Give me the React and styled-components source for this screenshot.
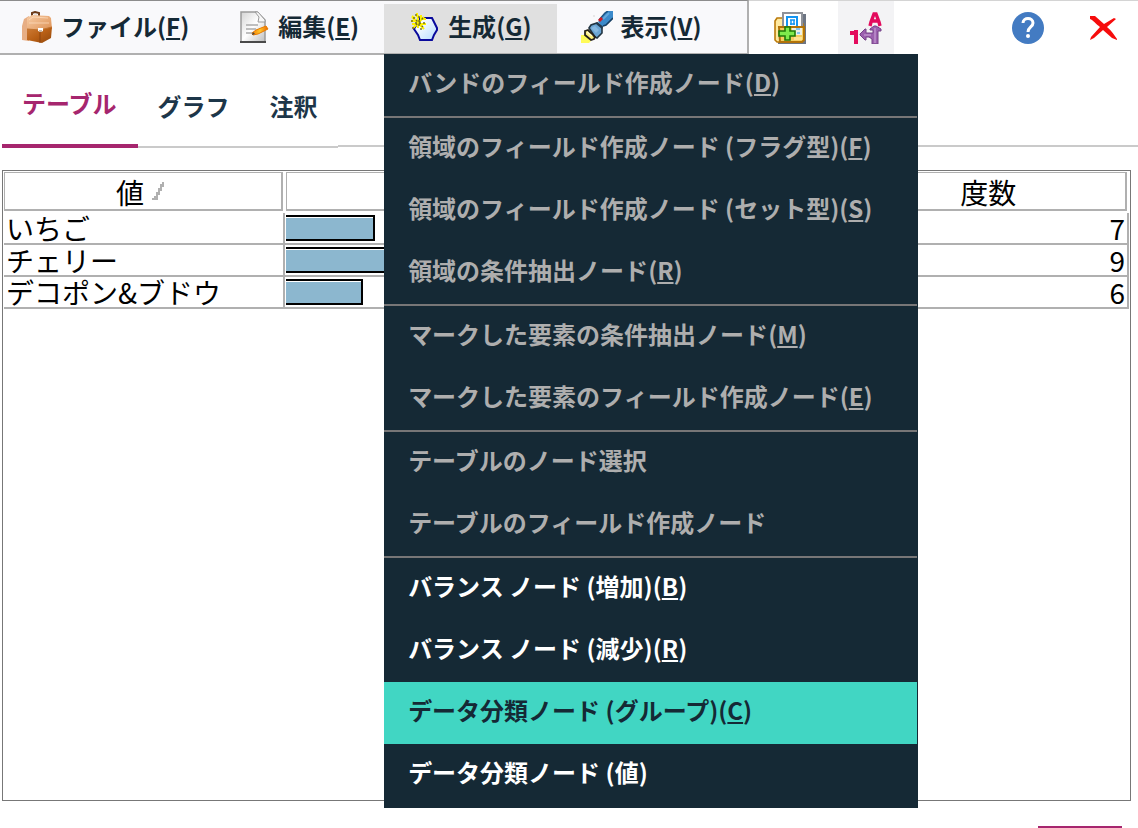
import React from 'react';
import styled, { createGlobalStyle } from 'styled-components';

const GlobalStyle = createGlobalStyle`
  * {
    box-sizing: border-box;
  }

  body {
    margin: 0;
    background: #fff;
    overflow: hidden;
  }

  body, button, table {
    font-family: "Noto Sans CJK JP", "Noto Sans", sans-serif;
  }
`;

const Window = styled.div`
  display: flex;
  flex-direction: column;
  height: 100vh;
`;

const TopBar = styled.header`
  display: flex;
  justify-content: space-between;
  flex: none;
  height: 55px;
  border-top: 1px solid #d4d4d4;
`;

const MenuBar = styled.nav`
  display: flex;
  margin-top: -1px;
  padding: 3px 20px 0 0;
  background: #f9f9fb;
  border-top: 1px solid #8c8c8c;
  border-right: 2px solid #b0b0b0;
  border-bottom: 2px solid #b0b0b0;
`;

const MenuItem = styled.div`
  position: relative;
`;

const MenuButton = styled.button`
  display: flex;
  align-items: center;
  gap: 8px;
  height: 100%;
  padding: 0 25px 4px ${(p) => (p.$first ? '21px' : '24px')};
  border: none;
  background: ${(p) => (p.$open ? '#e0e0e0' : 'transparent')};
  color: #152935;
  font-size: 24px;
  font-weight: 700;
  line-height: 36px;
  white-space: nowrap;
`;

const MenuText = styled.span`
  padding-bottom: 2px;
`;

const Mnemonic = styled.span`
  text-decoration: underline;
  text-decoration-thickness: 2px;
  text-underline-offset: 2px;
  text-decoration-skip-ink: none;
`;

const Icon = styled.svg`
  display: block;
  flex: none;
  width: 32px;
  height: 32px;
`;

const Dropdown = styled.div`
  position: absolute;
  top: calc(100% + 1px);
  left: 0;
  z-index: 10;
  min-width: 534px;
  padding: 0 1px 2px 0;
  background: #152935;
`;

const DropdownGroup = styled.div`
  & + & {
    border-top: 2px solid #777677;
  }
`;

const DropdownItem = styled.button`
  display: block;
  width: 100%;
  height: 62px;
  padding: 0 24px 7px;
  border: none;
  background: ${(p) => (p.$active ? '#41d6c3' : 'transparent')};
  color: ${(p) => (p.$active ? '#152935' : '#fff')};
  font-size: 24px;
  font-weight: 700;
  line-height: 36px;
  text-align: left;
  white-space: nowrap;

  &:disabled {
    color: #aeaeae;
  }
`;

const Tools = styled.div`
  display: flex;
  flex: 1;
  gap: 20px;
  padding: 0 6px 0 13px;
`;

const ToolButton = styled.button`
  display: flex;
  align-items: center;
  justify-content: center;
  width: 56px;
  padding: 0;
  border: none;
  background: ${(p) => (p.$pressed ? '#f3f3f5' : 'transparent')};
  margin-left: ${(p) => (p.$push ? 'auto' : '0')};
`;

const Tabs = styled.div`
  display: flex;
  flex: none;
  height: 93px;
  padding-left: 2px;

  &::after {
    content: '';
    flex: 1;
    margin-bottom: 1px;
    border-bottom: 2px solid #cacaca;
  }
`;

const Tab = styled.button`
  padding: ${(p) => (p.$active ? '6px 21px 0 20px' : '10px 20px 0')};
  border: none;
  border-bottom: ${(p) => (p.$active ? '4px solid #a6266e' : '2px solid #cacaca')};
  background: none;
  color: ${(p) => (p.$active ? '#a6266e' : '#1d3649')};
  font-size: 24px;
  font-weight: 700;
  line-height: 36px;
`;

const Panel = styled.main`
  flex: 1;
  min-height: 0;
  margin: 22px 7px 0 2px;
  padding: 1px;
  border: 1px solid #777;
`;

const Table = styled.table`
  width: 100%;
  table-layout: fixed;
  border-collapse: separate;
  border-spacing: 0;
  color: #000;
  font-size: 28px;
  line-height: 30px;
`;

const HeadCell = styled.th`
  padding: 0 2px 2px 0;
  font-weight: 400;

  & + & {
    padding-left: 1px;
  }
`;

const HeadBox = styled.div`
  display: flex;
  align-items: center;
  justify-content: center;
  gap: 8px;
  height: 39px;
  padding: 2px 0 0 2px;
  border: 1px solid #b0b0b0;
  border-width: 1px 2px 2px 1px;
`;

const SortMark = styled.svg`
  width: 20px;
  height: 20px;
`;

const Cell = styled.td`
  height: 32px;
  padding: 0 2px;
  border-right: 2px solid #b0b0b0;
  border-bottom: 2px solid #b0b0b0;
  text-align: ${(p) => (p.$number ? 'right' : 'left')};
  white-space: nowrap;
`;

const BarCell = styled(Cell)`
  padding: 0 0 0 1px;
`;

const Bar = styled.div`
  height: 26px;
  border: 2px solid #000;
  border-left: none;
  background: #8cb7cf;
  box-shadow: inset 0 1px 0 #fff;
`;

const Footer = styled.footer`
  display: flex;
  justify-content: flex-end;
  align-items: flex-start;
  flex: none;
  height: 27px;
  padding: 25px 16px 0;
  overflow: hidden;
`;

const FooterButton = styled.button`
  flex: none;
  width: 84px;
  height: 48px;
  border: 2px solid #a6266e;
  background: #fff;
`;

const BagIcon = () => (
  <Icon viewBox="0 0 32 32">
    <defs>
      <linearGradient id="bagTop" x1="0" y1="0" x2="1" y2="1">
        <stop offset="0" stopColor="#f8cda6" />
        <stop offset="1" stopColor="#dc8e50" />
      </linearGradient>
      <linearGradient id="bagLow" x1="0" y1="0" x2="1" y2="1">
        <stop offset="0" stopColor="#cf7d38" />
        <stop offset="0.5" stopColor="#b96016" />
        <stop offset="1" stopColor="#93480c" />
      </linearGradient>
    </defs>
    <path d="M1 15l2-7 5-3v25l-7-1z" fill="#e7ae84" />
    <path d="M11 5V2l3-1 4 1v3" fill="none" stroke="#6b3a18" strokeWidth="2" />
    <path d="M13 4h3" stroke="#e8e2dd" strokeWidth="2" />
    <path d="M6 7l5-3 17 1 2 2 1 11-12 3-13-2z" fill="url(#bagTop)" />
    <path d="M6 18l13 1 12-3-1 11-9 5-15-3z" fill="url(#bagLow)" />
    <path d="M6 18l13 1 12-3" fill="none" stroke="#c0732f" strokeWidth="1" />
    <path d="M8 9l4-3 15 1M8 12h20" fill="none" stroke="#ffe0c2" strokeWidth="1" opacity=".7" />
    <path d="M19 20v12" stroke="#8d450f" strokeWidth="1" />
    <path d="M17 17h5v3l-2 1-3-1z" fill="#fff" />
    <path d="M18 19h3v2h-3z" fill="#c9b6a5" />
  </Icon>
);

const EditIcon = () => (
  <Icon viewBox="0 0 32 32">
    <defs>
      <linearGradient id="paper" x1="0" y1="0" x2="1" y2="1">
        <stop offset="0" stopColor="#d4d4d4" />
        <stop offset="0.5" stopColor="#fff" />
        <stop offset="1" stopColor="#bdbdbd" />
      </linearGradient>
      <linearGradient id="pencil" x1="0" y1="0" x2="1" y2="0">
        <stop offset="0" stopColor="#f47a00" />
        <stop offset="0.5" stopColor="#ffc629" />
        <stop offset="1" stopColor="#e96500" />
      </linearGradient>
    </defs>
    <path d="M3 1h16l8 8v22H3z" fill="url(#paper)" stroke="#9a9a9a" strokeWidth="1.5" />
    <path d="M17 1h3l7 8v2h-7l1-5z" fill="#f7f7f7" stroke="#9a9a9a" strokeWidth="1" />
    <path d="M8 14h12M8 18h10M8 22h6" stroke="#aaa" strokeWidth="1.4" />
    <path d="M2 31h26" stroke="#4a4a4a" strokeWidth="2" />
    <path d="M14 22l4-3 10-4 2 3-10 5-5 1z" fill="url(#pencil)" stroke="#e87a00" strokeWidth="1" />
    <path d="M14 24l1-3 2 2z" fill="#444" />
  </Icon>
);

const GenerateIcon = () => (
  <Icon viewBox="0 0 32 32">
    <defs>
      <linearGradient id="hex" x1="0" y1="0" x2="1" y2="1">
        <stop offset="0.2" stopColor="#fff" />
        <stop offset="1" stopColor="#b4dcff" />
      </linearGradient>
    </defs>
    <path
      d="M12 7h12l2 4 3 6v2l-3 5-2 5H12l-2-5-4-6 4-7z"
      fill="url(#hex)"
      stroke="#0a0a9c"
      strokeWidth="2"
    />
    <path
      d="M9 2v4M4 5l3 2M3 10h5M4 6l12 12M16 6L5 17M10 4v13M4 13h12M12 8h6M13 4v3M14 13h4"
      fill="none"
      stroke="#fff200"
      strokeWidth="2"
    />
    <path
      d="M8 3v3M11 5v12M5 7h3M3 10h3M8 9l7 7M15 7l-8 8M7 12h10M4 17h2M13 17v2"
      fill="none"
      stroke="#74721a"
      strokeWidth="1.4"
      strokeDasharray="2 2"
    />
  </Icon>
);

const TorchIcon = () => (
  <Icon viewBox="0 0 32 32">
    <path d="M0 24h4l6 6-2 2H0z" fill="#fffb58" />
    <path d="M17 11l7-9 3-2h5v7l-7 7-4 2z" fill="#3b8acb" />
    <path d="M18 9l6-7 3-2" fill="none" stroke="#1d5585" strokeWidth="1.6" />
    <path d="M32 7l-7 7-3 1" fill="none" stroke="#173f63" strokeWidth="1.6" />
    <path d="M22 8l6-6" stroke="#64a8dc" strokeWidth="2" />
    <path d="M8 17l2-3 6-2 5 4 0 6-5 5-2-1z" fill="#6ba5d3" stroke="#223542" strokeWidth="1.6" />
    <path d="M16 11l6 5-1 2-6-5z" fill="#223b50" />
    <path d="M10 17l4-2 4 4-3 3z" fill="#86b8e0" />
    <path d="M4 20l3-1 7 7-1 2-3 1-6-5z" fill="#fdf07c" stroke="#26221a" strokeWidth="1.8" />
    <path d="M6 21l5 4" stroke="#fffac8" strokeWidth="1.6" />
    <path d="M17 9l3-3 2 2-3 3z" fill="#d7181f" />
    <path d="M12 4h2v2h-2z" fill="#e7e7e7" />
  </Icon>
);

const AddFolderIcon = () => (
  <Icon viewBox="0 0 32 32">
    <path d="M28 2h4v30H4v-2h24z" fill="#6d7583" />
    <path d="M1 9l2-3h6v6h20v16l-2 2H3l-2-2z" fill="#ffe9a0" stroke="#bb7a0a" strokeWidth="1.6" />
    <path d="M9 1h19v21H9z" fill="#fff" stroke="#8f9299" strokeWidth="2" />
    <path d="M13 17V5h10v12" fill="none" stroke="#1495f2" strokeWidth="2" />
    <path d="M16 8h5M16 12h5M17 8v5M20 8v5" stroke="#1495f2" strokeWidth="1.5" />
    <path d="M5 15h25v13l-2 2H6z" fill="#f5cd61" stroke="#b27208" strokeWidth="2" />
    <path d="M18 16h10v7h-7v-3h-3z" fill="#eef0e6" />
    <path d="M22 17h4M23 21h3" stroke="#63b8f2" strokeWidth="1.6" />
    <path d="M20 25h8v3h-8z" fill="#ffe491" />
    <path d="M11 15h5v4h5v5h-5v4h-5v-4H5v-5h6z" fill="#7eea4c" stroke="#1f7908" strokeWidth="1.6" />
  </Icon>
);

const ConvertIcon = () => (
  <Icon viewBox="0 0 32 32">
    <path d="M20 14l1-4 3-8h2l3 8 1 4M21 9h8" fill="none" stroke="#e30b5d" strokeWidth="3.4" />
    <path d="M0 21h6M6 18v14" fill="none" stroke="#e30b5d" strokeWidth="4" />
    <path
      d="M23 21v-3h-3v-1l4-3h2l5 3v2h-3v13h-6v-5l-3-2h-3v3h-1l-5-5v-1l5-5h1v4h4z"
      fill="#9b60ae"
      stroke="#744087"
      strokeWidth="1"
    />
    <path d="M14 23h7M25 16v15" fill="none" stroke="#b484c4" strokeWidth="2" />
  </Icon>
);

const HelpIcon = () => (
  <Icon viewBox="0 0 32 32">
    <circle cx="16" cy="16" r="16" fill="#437bc2" />
    <path
      d="M11 11c0-6 10-6 10 0 0 4-5 4-5 9"
      fill="none"
      stroke="#fff"
      strokeWidth="3"
    />
    <circle cx="16" cy="24" r="2" fill="#fff" />
  </Icon>
);

const CloseIcon = () => (
  <Icon viewBox="0 0 32 32">
    <path
      d="M2 4h5l9 8 10-6 2 1-9 8c5 4 7 8 10 12v1l-5-2-9-8-9 8-4 2 1-3 9-10C8 12 5 8 2 7z"
      fill="#f60c0c"
    />
  </Icon>
);

const generateGroups = [
  [{ text: 'バンドのフィールド作成ノード', keyChar: 'D', disabled: true }],
  [
    { text: '領域のフィールド作成ノード (フラグ型)', keyChar: 'F', disabled: true },
    { text: '領域のフィールド作成ノード (セット型)', keyChar: 'S', disabled: true },
    { text: '領域の条件抽出ノード', keyChar: 'R', disabled: true },
  ],
  [
    { text: 'マークした要素の条件抽出ノード', keyChar: 'M', disabled: true },
    { text: 'マークした要素のフィールド作成ノード', keyChar: 'E', disabled: true },
  ],
  [
    { text: 'テーブルのノード選択', disabled: true },
    { text: 'テーブルのフィールド作成ノード', disabled: true },
  ],
  [
    { text: 'バランス ノード (増加)', keyChar: 'B' },
    { text: 'バランス ノード (減少)', keyChar: 'R' },
    { text: 'データ分類ノード (グループ)', keyChar: 'C', active: true },
    { text: 'データ分類ノード (値)' },
  ],
];

const menus = [
  { text: 'ファイル', keyChar: 'F', icon: BagIcon },
  { text: '編集', keyChar: 'E', icon: EditIcon },
  { text: '生成', keyChar: 'G', icon: GenerateIcon, groups: generateGroups },
  { text: '表示', keyChar: 'V', icon: TorchIcon },
];

const rows = [
  { value: 'いちご', count: 7, bar: 89 },
  { value: 'チェリー', count: 9, bar: 115 },
  { value: 'デコポン&ブドウ', count: 6, bar: 77 },
];

const Label = ({ text, keyChar }) => (
  <MenuText>
    {text}
    {keyChar && (
      <>
        (<Mnemonic>{keyChar}</Mnemonic>)
      </>
    )}
  </MenuText>
);

const GenerateMenu = ({ groups }) => (
  <Dropdown role="menu">
    {groups.map((items, i) => (
      <DropdownGroup key={i}>
        {items.map((item) => (
          <DropdownItem
            key={item.text}
            type="button"
            role="menuitem"
            disabled={item.disabled}
            $active={item.active}
          >
            <Label text={item.text} keyChar={item.keyChar} />
          </DropdownItem>
        ))}
      </DropdownGroup>
    ))}
  </Dropdown>
);

const App = () => {
  return (
    <Window>
      <GlobalStyle />
      <TopBar>
        <MenuBar>
          {menus.map(({ text, keyChar, icon: MenuIcon, groups }, i) => (
            <MenuItem key={text}>
              <MenuButton type="button" $first={i === 0} $open={!!groups}>
                <MenuIcon />
                <Label text={text} keyChar={keyChar} />
              </MenuButton>
              {groups && <GenerateMenu groups={groups} />}
            </MenuItem>
          ))}
        </MenuBar>
        <Tools>
          <ToolButton type="button" aria-label="プロジェクトに追加"><AddFolderIcon /></ToolButton>
          <ToolButton type="button" aria-label="ラベル表示" $pressed><ConvertIcon /></ToolButton>
          <ToolButton type="button" aria-label="ヘルプ" $push><HelpIcon /></ToolButton>
          <ToolButton type="button" aria-label="閉じる"><CloseIcon /></ToolButton>
        </Tools>
      </TopBar>
      <Tabs role="tablist">
        <Tab type="button" role="tab" $active>テーブル</Tab>
        <Tab type="button" role="tab">グラフ</Tab>
        <Tab type="button" role="tab">注釈</Tab>
      </Tabs>
      <Panel>
        <Table>
          <thead>
            <tr>
              <HeadCell>
                <HeadBox>
                  値
                  <SortMark viewBox="0 0 20 20">
                    <path d="M10 0h2v5h-2v4H8v4H6v5H0v-2h2v-2h2v-4h2V6h2V2h2z" fill="#b0b0b0" />
                  </SortMark>
                </HeadBox>
              </HeadCell>
              <HeadCell><HeadBox /></HeadCell>
              <HeadCell><HeadBox /></HeadCell>
              <HeadCell><HeadBox>度数</HeadBox></HeadCell>
            </tr>
          </thead>
          <tbody>
            {rows.map((row) => (
              <tr key={row.value}>
                <Cell>{row.value}</Cell>
                <BarCell><Bar style={{ width: row.bar }} /></BarCell>
                <Cell />
                <Cell $number>{row.count}</Cell>
              </tr>
            ))}
          </tbody>
        </Table>
      </Panel>
      <Footer>
        <FooterButton type="button" aria-label="OK" />
      </Footer>
    </Window>
  );
};

export default App;
